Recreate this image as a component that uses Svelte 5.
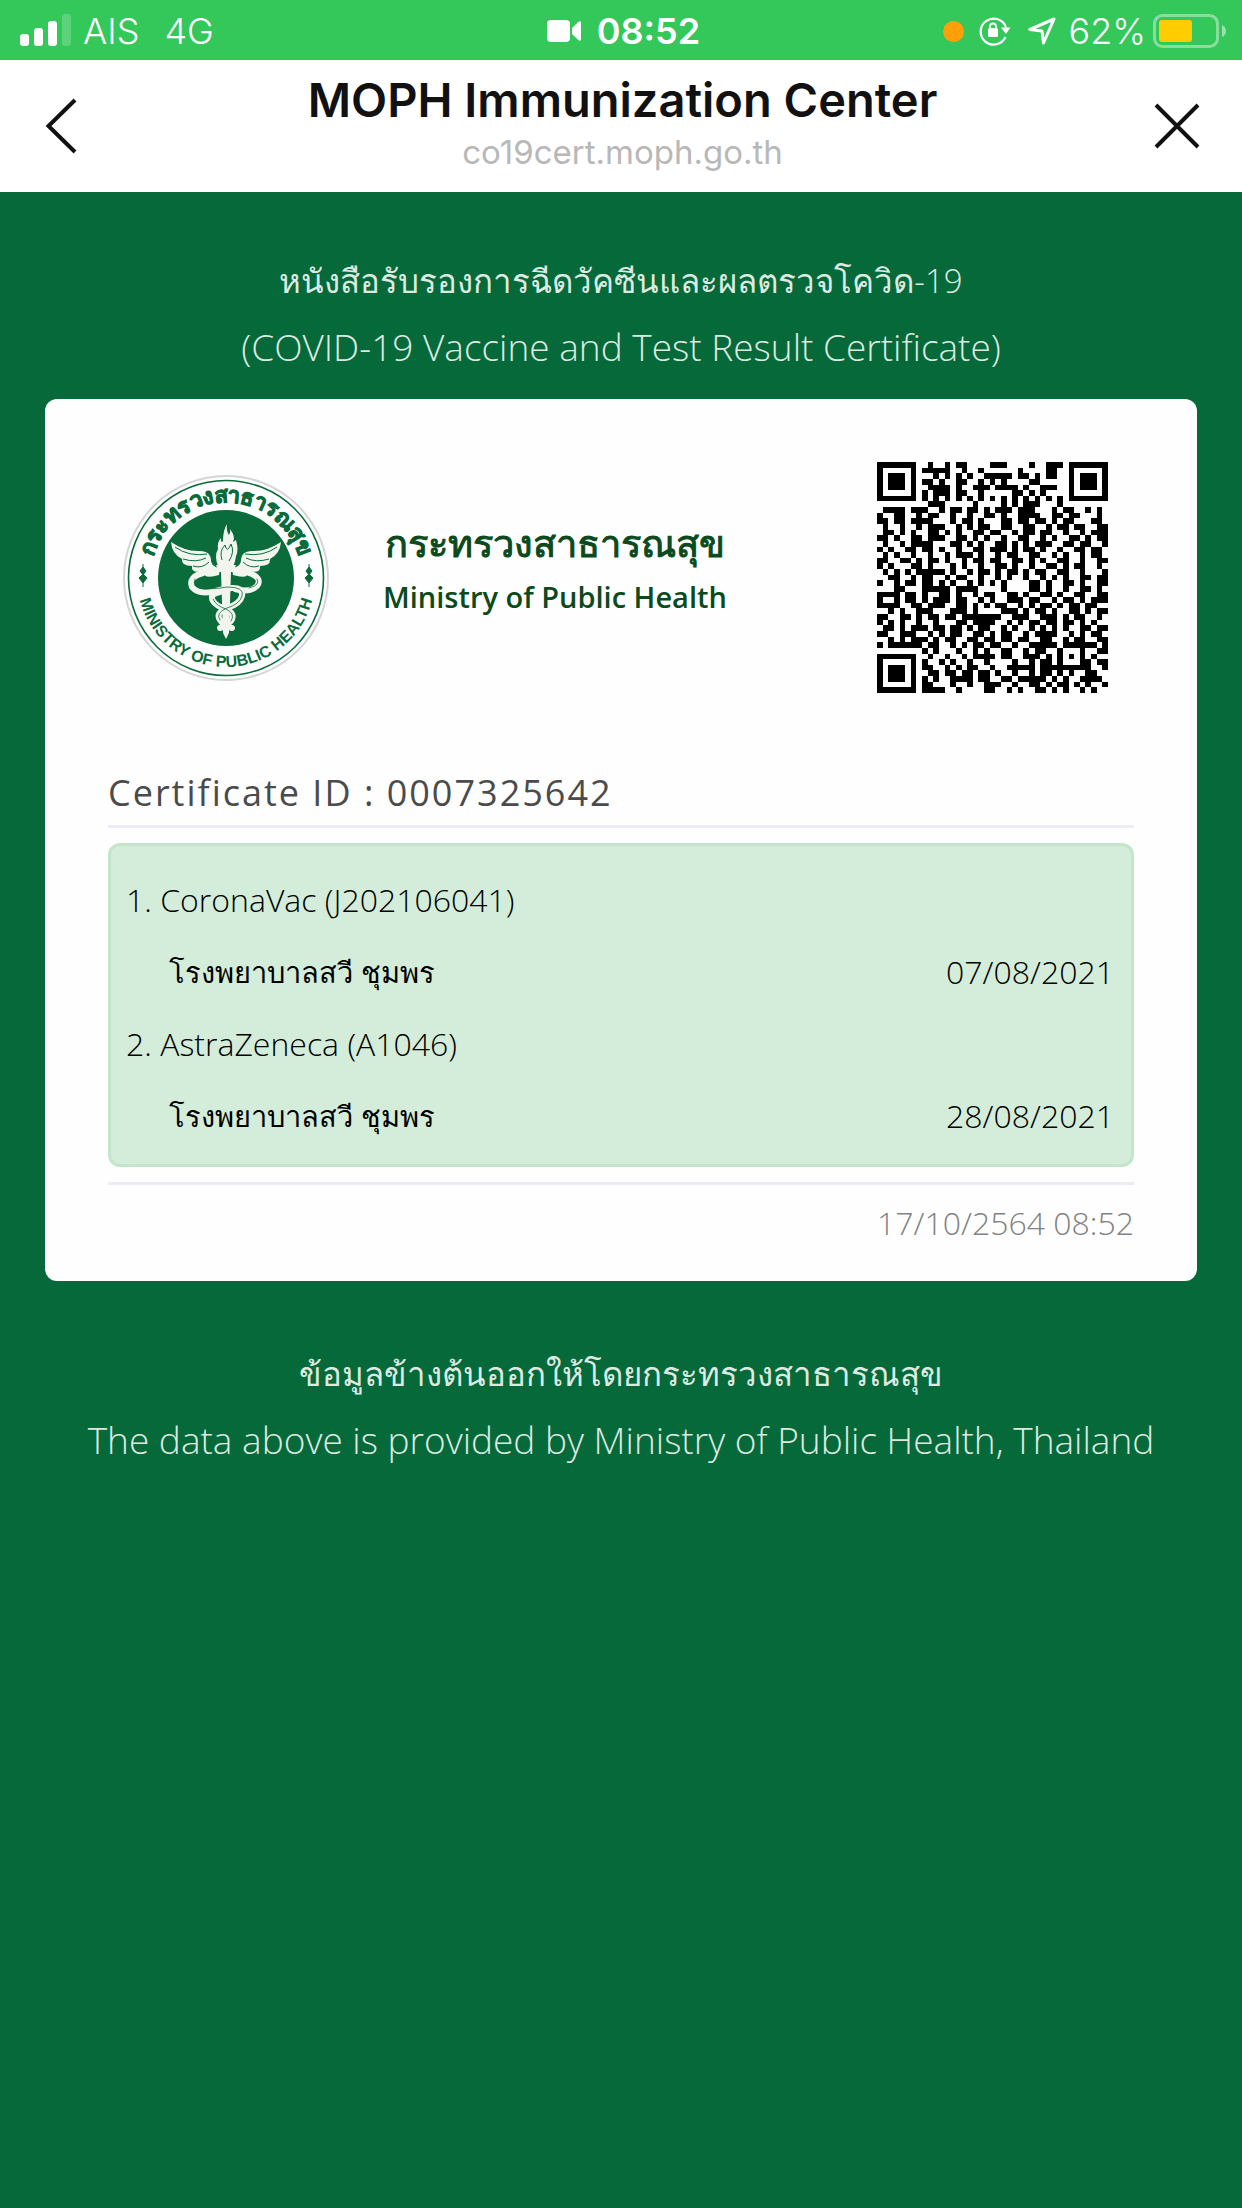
<script>
  const qrRows = [
    '#######..#..#.##....###....#..###.#######',
    '#.....#.#####..#..#......#....##..#.....#',
    '#.###.#...#.#.#.#..#####.##.#.##..#.###.#',
    '#.###.#.##.#..##..#.#.#....##.....#.###.#',
    '#.###.#..####.#..###.####.#..###..#.###.#',
    '#.....#.#.###.##..#.....##.#.#....#.....#',
    '#######.#.#.#.#.#.#.#.#.#.#.#.#.#.#######',
    '.........###.....#....#.#.###...#........',
    '.####.###..#.##.##.#.###.###...#.##..#.#.',
    '#..##..#.##..#..#..##.#..####..##.##...#.',
    '##.##.####...#.##.#...##.##.##.#.##...##.',
    '.#..#..#.###..#.#.##..##..##..#.##.##..##',
    '.##.#.#..##.#.#..##.##..#.##.##..#..#.###',
    '##.#..##.###..##.#.#..#..##..#.#..##.#.##',
    '.#..#.####...##.#.#..##.#.#.###..##.##..#',
    '#.#..##.##.#..#..##.###.#.##.#..#..##.##.',
    '.#.#..#..#..#.###.#..#.##..##..#.#..#.##.',
    '##..##.#.##.#..#.##.##..##.#.#..##..#..##',
    '#.#...##.#...#.#..#..##.#..#..##.#.##..#.',
    '.#.#.#.#####.#..#.##.#.##.#.##..##..#...#',
    '..##..#.##..#.##..#..#.#..#..#.#.#..##.##',
    '#..#.##.##.#.#..#.#.#.#....##.#..##.#..##',
    '...##...#####.####....#....##.#..#..##.#.',
    '####.##.#..##.#..#.##..##.#..##.#..##..##',
    '#..#.##.#.###.##..#.#..###.##..#.##.#.###',
    '####..##.###..##.#.#.##..#.#.##.#.##.##..',
    '..#.#..###...###.#....###.#.##.#..##.#.##',
    '##..##.#.##.##.#######..###..###.#.##..#.',
    '#.#.#..#..#...##.####..#.#.##.##.##.#.#..',
    '.##.#.###.##.##.#.##..#.#..#.#.#.#..##.##',
    '##..###..#.#.##..##.#.##..#.####..#.#.##.',
    '..#.#.###.#.##..##.##.##.##..##..#.##..##',
    '#.######.##..#.#.##.##..#..#####.######.#',
    '........#.#...#..#.#..##..#.##..#...#..##',
    '#######..#..#..#.####.##..###.#.#.#.#.#..',
    '#.....#.#..#.#..#..#....#..#.##.#...##.##',
    '#.###.#.##..#.#.##..#..#####.#########..#',
    '#.###.#..##.##.##.##.#..#..#.##.#.#..##..',
    '#.###.#.#.#..####.##..##.#####.#.#..####.',
    '#.....#.##...#..#..###..#..##.#.##.#.#..#',
    '#######.####..#....##..#.#..##.#.#..#.#..'
  ];
  const qrPath = qrRows
    .flatMap((row, y) => [...row].map((c, x) => (c === '#' ? `M${x} ${y}h1v1h-1z` : '')))
    .join('');
  const doses = [
    { name: 'CoronaVac', lot: 'J202106041', place: 'โรงพยาบาลสวี ชุมพร', date: '07/08/2021' },
    { name: 'AstraZeneca', lot: 'A1046', place: 'โรงพยาบาลสวี ชุมพร', date: '28/08/2021' }
  ];
</script>

<div class="screen">
  <div class="status">
    <div class="side">
      <svg class="signal" width="52" height="32" viewBox="0 0 52 32" fill="#fff" aria-hidden="true">
        <rect x="0" y="20" width="9" height="12" rx="3" />
        <rect x="14" y="14" width="9" height="18" rx="3" />
        <rect x="28" y="7" width="9" height="25" rx="3" />
        <rect x="42" y="0" width="9" height="32" rx="3" opacity=".2" />
      </svg>
      <span>AIS</span>
      <span class="net">4G</span>
    </div>
    <div class="clock">
      <svg width="34" height="22" viewBox="0 0 34 22" fill="#fff" aria-hidden="true">
        <rect width="23" height="22" rx="4" />
        <path d="M25 8L31 2.3Q34 0 34 3V19Q34 22 31 19.700L25 14Z" />
      </svg>
      <span>08:52</span>
    </div>
    <div class="side right">
      <i class="dot"></i>
      <svg class="lock" width="32" height="30" viewBox="0 0 32 30" aria-hidden="true">
        <path d="M26.500 21A13 13 0 1 1 27 11.500" fill="none" stroke="#fff" stroke-width="2.200" />
        <path d="M22 11.500h9.500L27 18z" fill="#fff" />
        <rect x="9" y="12" width="10" height="9" rx="1.500" fill="#fff" />
        <path d="M11 13V10.500a3 3 0 0 1 6 0V13" fill="none" stroke="#fff" stroke-width="1.800" />
      </svg>
      <svg class="arrow" width="28" height="28" viewBox="0 0 28 28" fill="none" stroke="#fff" stroke-width="3" stroke-linejoin="round" aria-hidden="true">
        <path d="M26 2L1.800 12.500L14 14L15.500 26Z" />
      </svg>
      <span>62%</span>
      <svg class="battery" width="74" height="34" viewBox="0 0 74 34" aria-hidden="true">
        <rect x="1.500" y="1.500" width="63" height="31" rx="8" fill="none" stroke="#fff" stroke-opacity=".42" stroke-width="3" />
        <rect x="6" y="6" width="33" height="22" rx="3" fill="#ffcc00" />
        <path d="M69 11q4 2 4 6t-4 6z" fill="#fff" fill-opacity=".5" />
      </svg>
    </div>
  </div>

  <header>
    <button aria-label="Back">
      <svg width="32" height="56" viewBox="0 0 32 56" fill="none" stroke="#111" stroke-width="4"><path d="M30 2L3.500 28L30 54" /></svg>
    </button>
    <div class="heading">
      <h1>MOPH Immunization Center</h1>
      <p>co19cert.moph.go.th</p>
    </div>
    <button aria-label="Close">
      <svg width="46" height="46" viewBox="0 0 46 46" fill="none" stroke="#111" stroke-width="4"><path d="M2 2L44 44M44 2L2 44" /></svg>
    </button>
  </header>

  <main>
    <div class="caption">
      <p class="thai">หนังสือรับรองการฉีดวัคซีนและผลตรวจโควิด-19</p>
      <p>(COVID-19 Vaccine and Test Result Certificate)</p>
    </div>

    <section class="card">
      <div class="brand">
        <svg class="seal" viewBox="0 0 206 206" role="img" aria-label="Ministry of Public Health seal">
          <defs>
            <path id="arcTop" d="M27 103A76 76 0 0 1 179 103" />
            <path id="arcBottom" d="M14 103A89 89 0 0 0 192 103" />
          </defs>
          <circle cx="103" cy="103" r="102" fill="#fff" stroke="#d5d5d5" stroke-width="2" />
          <circle cx="103" cy="103" r="97.500" fill="#fff" stroke="#0a6b3b" stroke-width="1.600" />
          <circle cx="103" cy="103" r="68" fill="#0a6b3b" />
          <text class="ring thai-ring"><textPath href="#arcTop" startOffset="50%" text-anchor="middle">กระทรวงสาธารณสุข</textPath></text>
          <text class="ring"><textPath href="#arcBottom" startOffset="50%" text-anchor="middle">MINISTRY OF PUBLIC HEALTH</textPath></text>
          <path
            d="M20 89V112M20 92l-3 4 3 4 3-4zM20 99l-4 4 4 5 4-5zM186 89V112M186 92l-3 4 3 4 3-4zM186 99l-4 4 4 5 4-5z"
            fill="#0a6b3b" stroke="#0a6b3b" stroke-width="1"
          />
          <g fill="#f1f5ee">
            <path d="M95 91Q91 81 95 74Q94 67 98 63Q98 69 100 66Q100 55 104 49Q103 56 106 60Q108 57 107 54Q113 62 110 67L113 65Q116 75 113 81Q112 88 110 91Z" />
            <path d="M96 100Q80 105 80 96Q68 99 69 91Q58 91 59 84Q49 79 48 67Q63 77 77 76Q88 76 88 86Q89 92 97 93Z" />
            <path d="M110 100Q126 105 126 96Q138 99 137 91Q148 91 147 84Q157 79 158 67Q143 77 129 76Q118 76 118 86Q117 92 109 93Z" />
            <path d="M93 90h20l-3 7h-2l-2 61-3 6-3-6-2-61h-2z" />
          </g>
          <path
            d="M52 72Q66 82 84 79M60 84Q73 88 83 83M70 91Q79 94 86 87M154 72Q140 82 122 79M146 84Q133 88 123 83M136 91Q127 94 120 87M99 85Q96 76 102 70Q104 79 108 69Q112 77 106 86"
            fill="none" stroke="#0a6b3b" stroke-width="1"
          />
          <g fill="none" stroke-linecap="round">
            <path d="M80 98Q65 102 69 112Q76 121 96 115Q121 109 119 121Q117 129 104 133Q92 138 97 145Q101 151 109 153M126 98Q140 103 134 111Q127 118 112 114M97 117Q86 119 90 126Q93 131 103 134Q113 139 108 146Q104 151 97 153" stroke="#f1f5ee" stroke-width="6" />
            <path d="M72 104Q68 112 82 114Q94 114 104 112Q122 112 119 121Q117 129 104 133Q92 138 97 145M134 104Q138 110 126 113M90 124Q93 131 103 134Q113 139 108 146" stroke="#0a6b3b" stroke-width=".8" />
          </g>
        </svg>
        <div class="ministry">
          <strong>กระทรวงสาธารณสุข</strong>
          <span>Ministry of Public Health</span>
        </div>
        <svg class="qr" viewBox="0 0 41 41" shape-rendering="crispEdges" role="img" aria-label="QR code"><path d={qrPath} /></svg>
      </div>

      <h2>Certificate ID : 0007325642</h2>
      <ol>
        {#each doses as dose, i}
          <li>
            <div class="row">{i + 1}. {dose.name} ({dose.lot})</div>
            <div class="row detail"><span class="place">{dose.place}</span><time>{dose.date}</time></div>
          </li>
        {/each}
      </ol>
      <p class="issued">17/10/2564 08:52</p>
    </section>

    <div class="caption foot">
      <p class="thai">ข้อมูลข้างต้นออกให้โดยกระทรวงสาธารณสุข</p>
      <p>The data above is provided by Ministry of Public Health, Thailand</p>
    </div>
  </main>
</div>

<style>
  :global(body) { background: #066939; }
  h1, h2, p, ol { margin: 0; padding: 0; font-weight: inherit; }
  .screen { font-family: 'Open Sans', 'Noto Sans', sans-serif; font-weight: 300; }
  svg { display: block; flex: none; }

  .status {
    display: grid;
    grid-template-columns: 1fr auto 1fr;
    align-items: center;
    height: 60px;
    padding: 2px 15px 0 20px;
    box-sizing: border-box;
    background: #34c759;
    color: #fff;
    font: 300 36px/56px Inter, sans-serif;
  }
  .side, .clock { display: flex; align-items: center; }
  .signal { margin: 0 11px 2px 0; }
  .net { margin-left: 25px; }
  .clock { gap: 16px; font-weight: 600; }
  .right { justify-content: flex-end; }
  .dot { width: 21px; height: 21px; border-radius: 50%; background: #ff9f0a; }
  .lock { margin-left: 15px; }
  .arrow { margin: 0 13px 0 17px; }
  .battery { margin-left: 7px; }

  header {
    display: flex;
    align-items: center;
    justify-content: space-between;
    height: 132px;
    padding: 0 42px 0 45px;
    box-sizing: border-box;
    background: #fff;
    font-family: Inter, sans-serif;
    text-align: center;
  }
  button { display: grid; place-items: center; width: 48px; height: 60px; padding: 0; border: 0; background: none; }
  button:first-child { justify-items: start; }
  button:last-child { justify-items: end; }
  h1 { color: #111; font-size: 47px; font-weight: 600; line-height: 56px; }
  .heading { padding-bottom: 4px; }
  .heading p { color: #b8b8b8; font-size: 33px; font-weight: 400; line-height: 48px; }

  main { padding: 56px 45px; }
  .caption { color: #dceae2; font-size: 37px; line-height: 66px; text-align: center; }
  .caption .thai { font-size: 33px; }
  .card { margin-top: 19px; padding: 63px 63px 32px; border-radius: 12px; background: #fefefe; }
  .brand { display: flex; align-items: center; }
  .seal { width: 206px; margin-left: 15px; }
  .ring { fill: #0a6b3b; font: 700 16px 'Liberation Sans', sans-serif; }
  .thai-ring { font-size: 22px; stroke: #0a6b3b; stroke-width: 1px; }
  .ministry { display: flex; flex-direction: column; margin: 0 auto 0 54px; padding-bottom: 18px; color: #0a4a1c; text-align: center; }
  .ministry strong { font-size: 38px; line-height: 56px; -webkit-text-stroke: 1px #0a4a1c; }
  .ministry span { font-size: 29px; font-weight: 600; line-height: 54px; }
  .qr { width: 231px; margin-right: 26px; }
  h2 {
    margin-top: 66px;
    padding-top: 2px;
    border-bottom: 3px solid #ececf6;
    color: #4b4b4b;
    font-size: 36px;
    font-weight: 400;
    letter-spacing: 2px;
    line-height: 64px;
  }
  ol {
    margin: 15px 0;
    padding: 18px 17px 12px 15px;
    border: 3px solid #c3e6cb;
    border-radius: 12px;
    background: #d4edda;
    color: #000;
    font-size: 32px;
    line-height: 72px;
    list-style: none;
  }
  .row { display: flex; justify-content: space-between; }
  .detail { padding-left: 43px; }
  .place { font-size: 29px; }
  .issued { padding-top: 12px; border-top: 3px solid #ececf6; color: #828282; font-size: 32px; line-height: 52px; text-align: right; }
  .foot { margin-top: 60px; }
</style>
